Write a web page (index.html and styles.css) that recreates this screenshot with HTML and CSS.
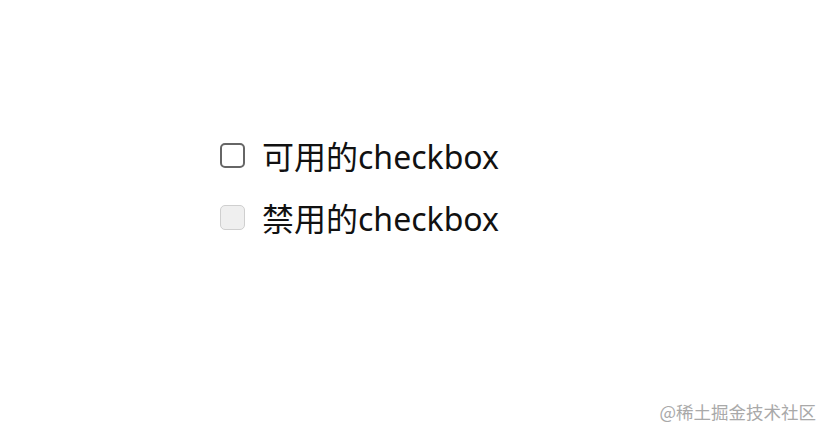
FILE: index.html
```html
<!DOCTYPE html>
<html lang="zh-CN">
<head>
    <meta charset="UTF-8">
    <title>checkbox</title>
    <link rel="stylesheet" href="styles.css">
</head>
<body>
    <div class="demo">
        <label class="check-row">
            <input type="checkbox" class="check">
            <span>可用的checkbox</span>
        </label>
        <label class="check-row">
            <input type="checkbox" class="check" disabled>
            <span>禁用的checkbox</span>
        </label>
    </div>
    <div class="watermark">@稀土掘金技术社区</div>
</body>
</html>
```

FILE: styles.css
```css
body {
    margin: 0;
    width: 830px;
    height: 438px;
    background: #ffffff;
    font-family: "Noto Sans", "Noto Sans CJK SC", sans-serif;
    position: relative;
    overflow: hidden;
}

.demo {
    display: flex;
    flex-direction: column;
    gap: 20px;
    padding: 134px 0 0 220px;
}

.check-row {
    display: flex;
    align-items: center;
    gap: 17px;
    height: 42px;
    font-size: 32px;
    color: #111;
}

.check {
    appearance: none;
    width: 25px;
    height: 25px;
    margin: 0;
    border: 2px solid #666;
    border-radius: 5px;
    background: #fff;
    box-sizing: border-box;
}

.check:disabled {
    border: 1px solid #cfcfcf;
    background: #efefef;
}

.watermark {
    position: absolute;
    right: 14px;
    bottom: 14px;
    font-size: 17.5px;
    color: #a9a9a9;
    font-family: "Noto Sans CJK SC", sans-serif;
}
```
